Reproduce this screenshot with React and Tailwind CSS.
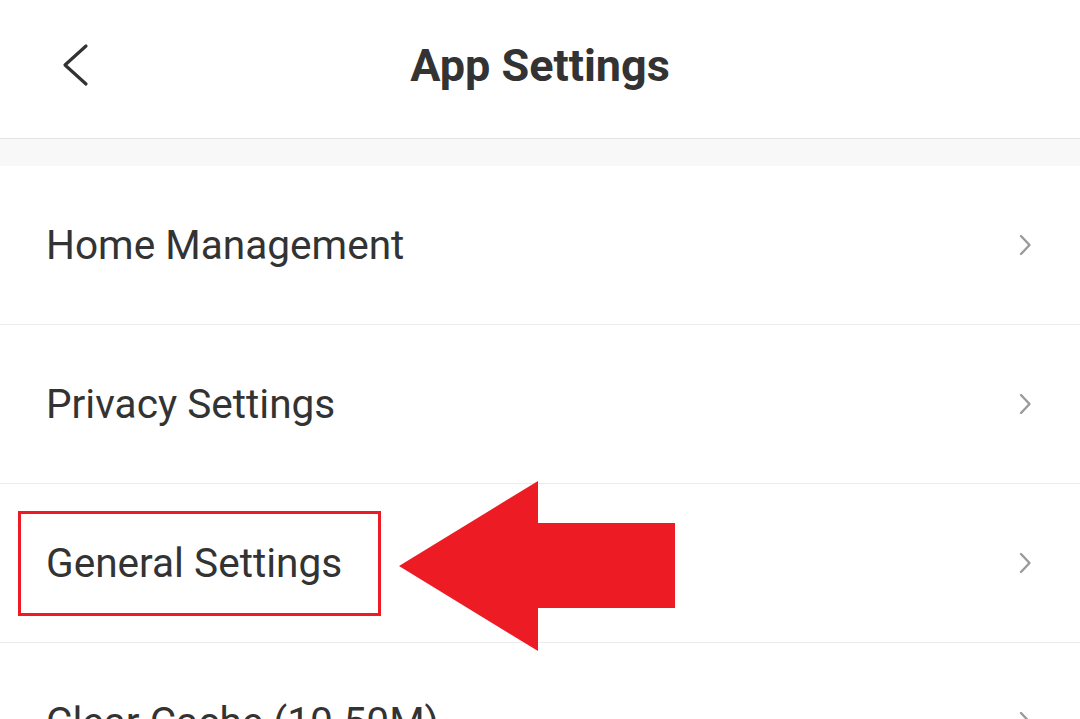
import React from "react";

function ChevronRight() {
  return (
    <svg width="14" height="22" viewBox="0 0 14 22" fill="none">
      <path d="M3 2 L11.5 11 L3 20" stroke="#9a9a9a" strokeWidth="2.4" strokeLinecap="round" strokeLinejoin="round" />
    </svg>
  );
}

function Row({ label, children }) {
  return (
    <div className="relative flex h-[159px] items-center justify-between border-b border-[#ececec] pl-[46px] pr-[48px]">
      <span className="text-[40.6px] leading-none text-[#333333]">{label}</span>
      <ChevronRight />
      {children}
    </div>
  );
}

export default function App() {
  return (
    <div className="h-[719px] w-[1080px] overflow-hidden bg-white" style={{ fontFamily: "Roboto, 'Noto Sans', sans-serif" }}>
      <div className="relative flex h-[139px] items-center justify-center border-b border-[#e3e3e3]">
        <div className="absolute left-[60px] top-[43px]">
          <svg width="32" height="44" viewBox="0 0 32 44" fill="none">
            <path d="M26 3 L5 22 L26 41" stroke="#333333" strokeWidth="3.2" strokeLinecap="round" strokeLinejoin="round" />
          </svg>
        </div>
        <h1 className="pb-[8px] text-[45px] font-bold leading-none text-[#333333]">App Settings</h1>
      </div>
      <div className="h-[27px] bg-[#f8f8f8]" />
      <Row label="Home Management" />
      <Row label="Privacy Settings" />
      <Row label="General Settings">
        <div className="pointer-events-none absolute left-[18px] top-[27px] h-[105px] w-[363px] border-[3px] border-[#ed1c24]" />
        <svg className="pointer-events-none absolute left-[398px] top-[-3px]" width="280" height="172" viewBox="0 0 280 172">
          <polygon points="1,85 140,0 140,42 277,42 277,127 140,127 140,170" fill="#ed1c24" />
        </svg>
      </Row>
      <Row label="Clear Cache (10.50M)" />
    </div>
  );
}
